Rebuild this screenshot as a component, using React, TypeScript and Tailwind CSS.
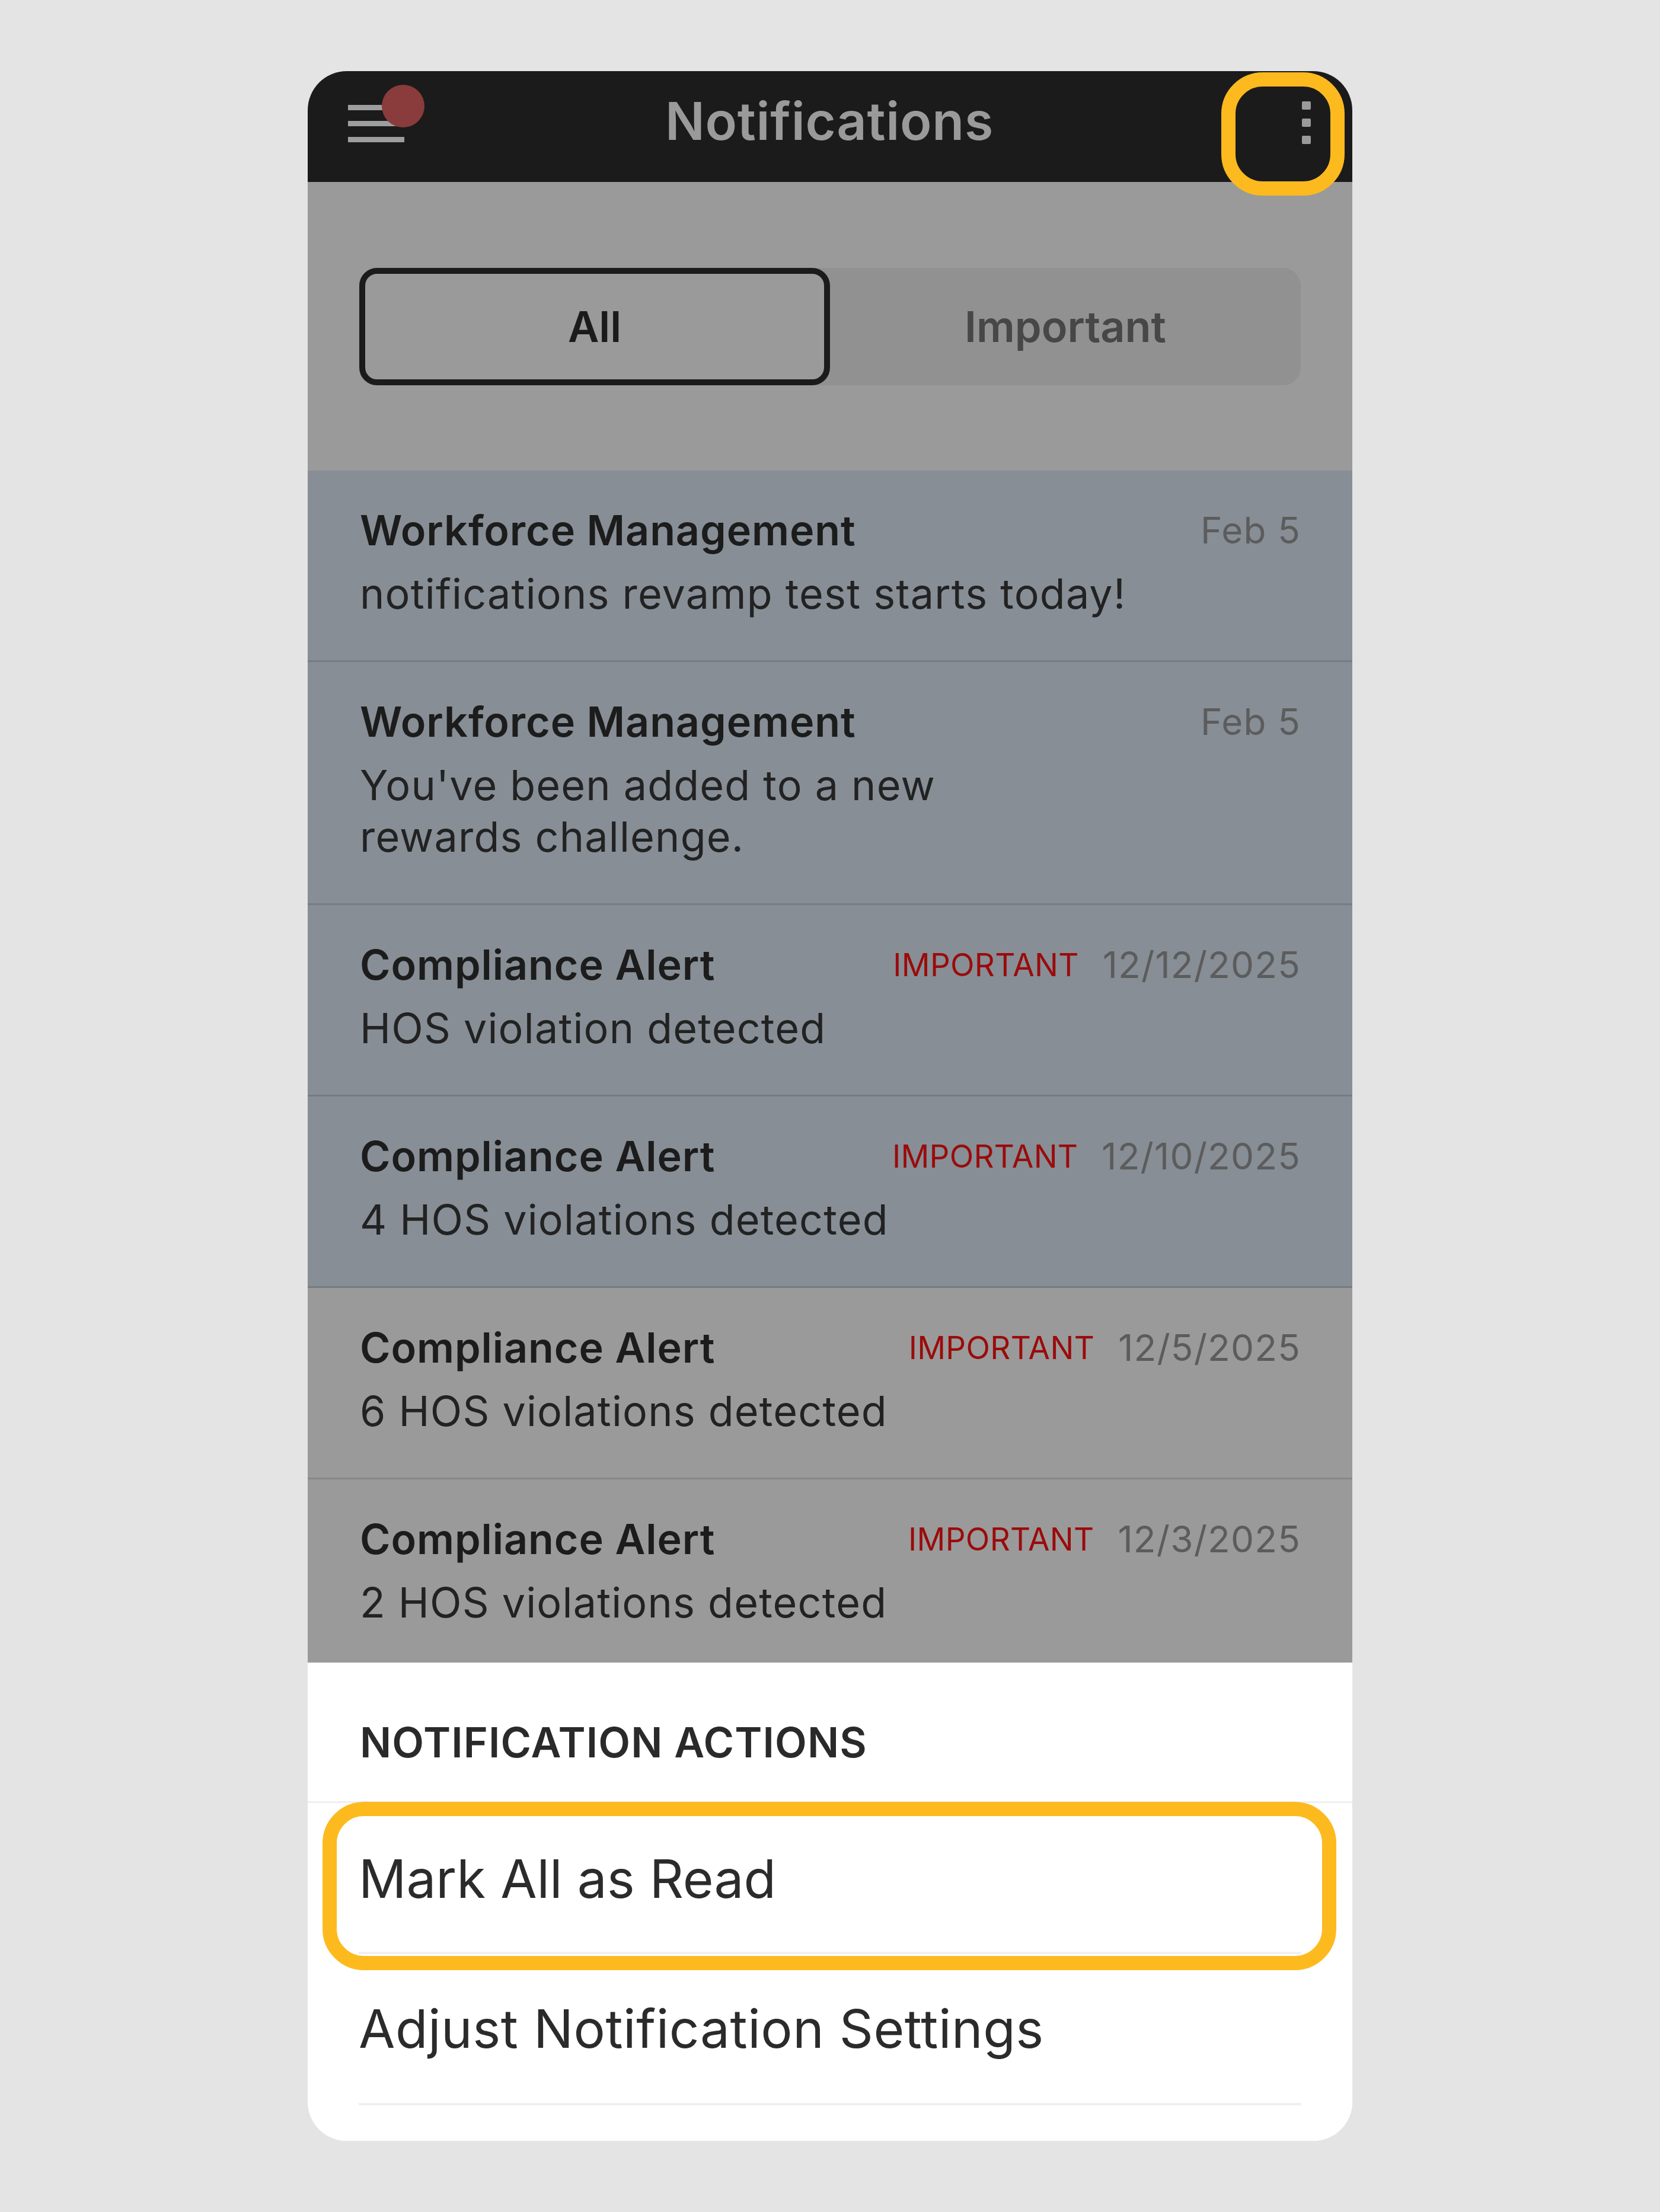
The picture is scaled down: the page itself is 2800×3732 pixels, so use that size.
import React from "react";

type Row = {
  title: string;
  body: React.ReactNode;
  date: string;
  important?: boolean;
  unread: boolean;
};

const rows: Row[] = [
  { title: "Workforce Management", body: "notifications revamp test starts today!", date: "Feb 5", unread: true },
  {
    title: "Workforce Management",
    body: (
      <>
        You've been added to a new
        <br />
        rewards challenge.
      </>
    ),
    date: "Feb 5",
    unread: true,
  },
  { title: "Compliance Alert", body: "HOS violation detected", date: "12/12/2025", important: true, unread: true },
  { title: "Compliance Alert", body: "4 HOS violations detected", date: "12/10/2025", important: true, unread: true },
  { title: "Compliance Alert", body: "6 HOS violations detected", date: "12/5/2025", important: true, unread: false },
  { title: "Compliance Alert", body: "2 HOS violations detected", date: "12/3/2025", important: true, unread: false },
];

function NotificationRow({ row }: { row: Row }) {
  return (
    <div
      className={
        "pl-[88px] pr-[87px] pt-[57px] pb-[69px] border-b-[3px] " +
        (row.unread ? "bg-[#878E96] border-[#777C82]" : "bg-[#9A9A9A] border-[#888888]")
      }
    >
      <div className="flex items-start">
        <div className="flex-1 text-[70px] leading-[88px] font-semibold tracking-[0.013em] text-[#1C1C1C]">
          {row.title}
        </div>
        {row.important && (
          <div className="text-[53px] leading-[88px] tracking-[0.005em] text-[#9A0B0A] mr-[40px]">IMPORTANT</div>
        )}
        <div className="text-[62px] leading-[88px] tracking-[0.018em] text-[#5C5C5C]">{row.date}</div>
      </div>
      <div className="mt-[19px] text-[70px] leading-[87px] tracking-[0.017em] text-[#222222]">{row.body}</div>
    </div>
  );
}

export default function App() {
  return (
    <div
      className="w-[2800px] min-h-[3732px] bg-[#E4E4E4] flex justify-center pt-[120px] pb-[120px]"
      style={{ fontFamily: "Inter, 'Noto Sans', sans-serif" }}
    >
      <div className="relative w-[1762px] h-[3492px]">
        <div className="w-full h-full rounded-[66px] overflow-hidden flex flex-col bg-white">
          {/* Header */}
          <div className="h-[187px] bg-[#1B1B1B] flex items-start justify-between pl-[68px] pr-[70px] shrink-0">
            <div className="relative w-[95px] mt-[57px] flex flex-col gap-[18px]">
              <div className="h-[9px] w-[95px] bg-[#9E9E9E]" />
              <div className="h-[9px] w-[95px] bg-[#9E9E9E]" />
              <div className="h-[9px] w-[95px] bg-[#9E9E9E]" />
              <div className="absolute left-[57px] top-[-34px] w-[72px] h-[72px] rounded-full bg-[#8A3B3B]" />
            </div>
            <div className="pt-[31px] text-[88px] leading-[106px] font-semibold tracking-[0.008em] text-[#9A9A9A]">
              Notifications
            </div>
            <div className="w-[95px] mt-[51px] flex flex-col items-end gap-[15px]">
              <div className="w-[15px] h-[14px] rounded-[2px] bg-[#9A9A9A]" />
              <div className="w-[15px] h-[14px] rounded-[2px] bg-[#9A9A9A]" />
              <div className="w-[15px] h-[14px] rounded-[2px] bg-[#9A9A9A]" />
            </div>
          </div>

          {/* Tabs */}
          <div className="bg-[#9A9A9A] px-[87px] pt-[145px] pb-[144px] shrink-0">
            <div className="h-[198px] rounded-[30px] bg-[#919191] flex">
              <div className="w-1/2 h-full rounded-[30px] border-[10px] border-[#1B1B1B] bg-[#9A9A9A] flex items-center justify-center text-[72px] font-semibold text-[#1B1B1B]">
                All
              </div>
              <div className="w-1/2 h-full flex items-center justify-center text-[72px] font-semibold text-[#474747]">
                Important
              </div>
            </div>
          </div>

          {/* List */}
          <div className="h-[2011px] overflow-hidden shrink-0 bg-[#9A9A9A]">
            {rows.map((r, i) => (
              <NotificationRow key={i} row={r} />
            ))}
          </div>

          {/* Bottom sheet */}
          <div className="flex-1 bg-white">
            <div className="px-[88px] pt-[92px] pb-[56px] border-b-[3px] border-[#EFEFEF] text-[70px] leading-[86px] font-semibold tracking-[0.016em] text-[#2A2A2A]">
              NOTIFICATION ACTIONS
            </div>
            <div className="mx-[86px] pt-[74px] pb-[69px] border-b-[4px] border-[#F0F0F0] text-[89px] leading-[108px] text-[#2B2B2B]">
              Mark All as Read
            </div>
            <div className="mx-[86px] pt-[72px] pb-[71px] border-b-[4px] border-[#F0F0F0] text-[89px] leading-[108px] tracking-[0.006em] text-[#2B2B2B]">
              Adjust Notification Settings
            </div>
          </div>
        </div>

        {/* Highlight overlays */}
        <div className="absolute left-[1541px] top-[2px] w-[208px] h-[208px] rounded-[70px] border-[24px] border-[#FDBA1F]" />
        <div className="absolute left-[25px] top-[2920px] w-[1710px] h-[284px] rounded-[70px] border-[24px] border-[#FDBA1F]" />
      </div>
    </div>
  );
}
